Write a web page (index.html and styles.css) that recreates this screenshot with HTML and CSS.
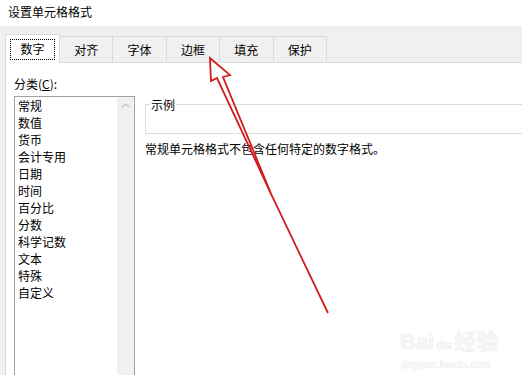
FILE: index.html
```html
<!DOCTYPE html>
<html lang="zh-CN">
<head>
  <meta charset="UTF-8">
  <title>设置单元格格式</title>
  <link rel="stylesheet" href="styles.css">
</head>
<body>
  <div class="titlebar">设置单元格格式</div>

  <div class="dialog">
    <div class="tabs">
      <div class="tab active"><span class="focus">数字</span></div>
      <div class="tab">对齐</div>
      <div class="tab">字体</div>
      <div class="tab">边框</div>
      <div class="tab">填充</div>
      <div class="tab">保护</div>
    </div>

    <div class="panel">
      <div class="category">
        <div class="label">分类(<u>C</u>):</div>
        <div class="listbox">
          <ul class="items">
            <li>常规</li>
            <li>数值</li>
            <li>货币</li>
            <li>会计专用</li>
            <li>日期</li>
            <li>时间</li>
            <li>百分比</li>
            <li>分数</li>
            <li>科学记数</li>
            <li>文本</li>
            <li>特殊</li>
            <li>自定义</li>
          </ul>
          <div class="scrollbar">
            <svg width="17" height="14" viewBox="0 0 17 14">
              <polyline points="5,10 8.5,7 12,10" fill="none" stroke="#c2c2c2" stroke-width="1.3"/>
            </svg>
          </div>
        </div>
      </div>

      <div class="detail">
        <fieldset class="sample">
          <legend>示例</legend>
        </fieldset>
        <p class="desc">常规单元格格式不包含任何特定的数字格式。</p>
      </div>
    </div>
  </div>

  <!-- 标注箭头 -->
  <svg class="arrow" width="522" height="375" viewBox="0 0 522 375">
    <path d="M272,196 L217,78 L211,81 L210,58 L230,75 L223,77 L272,196 L328,313"
          fill="none" stroke="#d01e1e" stroke-width="1.8" stroke-linejoin="miter"/>
  </svg>

  <div class="watermark">
    <div class="wm-logo">Bai<span class="wm-du">du</span>经验</div>
    <div class="wm-url">jingyan.baidu.com</div>
  </div>
</body>
</html>
```

FILE: styles.css
```css
body {
  margin: 0;
  width: 522px;
  height: 375px;
  overflow: hidden;
  position: relative;
  background-color: #fff;
  color: #000;
  font-family: "Noto Sans CJK SC", "Liberation Sans", sans-serif;
  font-size: 12px;
}

.titlebar {
  height: 26px;
  line-height: 24px;
  padding-left: 8px;
  background-color: #fff;
}

.dialog {
  background-color: #f0f0f0;
  padding: 8px 0 0 5px;
  height: 341px;
}

.tabs {
  display: flex;
  align-items: flex-end;
  height: 28px;
  border-bottom: 1px solid #d9d9d9;
}

.tab {
  box-sizing: border-box;
  width: 53.4px;
  height: 26px;
  line-height: 25px;
  text-align: center;
  border-top: 1px solid #d9d9d9;
  border-right: 1px solid #d9d9d9;
}

.tab.active {
  width: 55px;
  height: 29px;
  margin-bottom: -1px;
  padding-top: 4px;
  line-height: 20px;
  background-color: #fff;
  border-left: 1px solid #d9d9d9;
}

.focus {
  display: inline-block;
  width: 43px;
  height: 19px;
  line-height: 17px;
  border: 1px dotted #000;
}

.panel {
  display: flex;
  gap: 10px;
  height: 312px;
  overflow: hidden;
  background-color: #fff;
  border-left: 1px solid #d9d9d9;
  padding-left: 8px;
}

.label {
  padding-top: 12px;
  line-height: 17px;
  margin-bottom: 4px;
}

.listbox {
  display: flex;
  width: 121px;
  height: 290px;
  box-sizing: border-box;
  border: 1px solid #a0a0a0;
}

.items {
  flex: 1;
  list-style: none;
  margin: 0;
  padding: 0 0 0 3px;
  line-height: 17px;
}

.scrollbar {
  width: 17px;
  background-color: #f0f0f0;
}

.scrollbar svg {
  display: block;
}

.detail {
  flex: 1;
}

.sample {
  width: 400px;
  height: 36px;
  margin: 33px 0 0;
  padding: 0;
  border: 1px solid #dcdcdc;
}

.sample legend {
  margin-left: 4px;
  padding: 0 1px;
  line-height: 17px;
}

.desc {
  margin: 6px 0 0;
  line-height: 17px;
}

.arrow {
  position: absolute;
  left: 0;
  top: 0;
  pointer-events: none;
}

.watermark {
  position: absolute;
  left: 400px;
  top: 330px;
  color: #f5f5f5;
  font-family: "Liberation Sans", "Noto Sans CJK SC", sans-serif;
  text-shadow: 0 0 1px #e0e0e0;
}

.wm-logo {
  font-size: 22px;
  font-weight: bold;
  line-height: 24px;
}

.wm-du {
  font-size: 13px;
  border-radius: 50%;
  padding: 0 2px;
}

.wm-url {
  font-size: 11px;
  line-height: 14px;
  padding-left: 2px;
}
```
